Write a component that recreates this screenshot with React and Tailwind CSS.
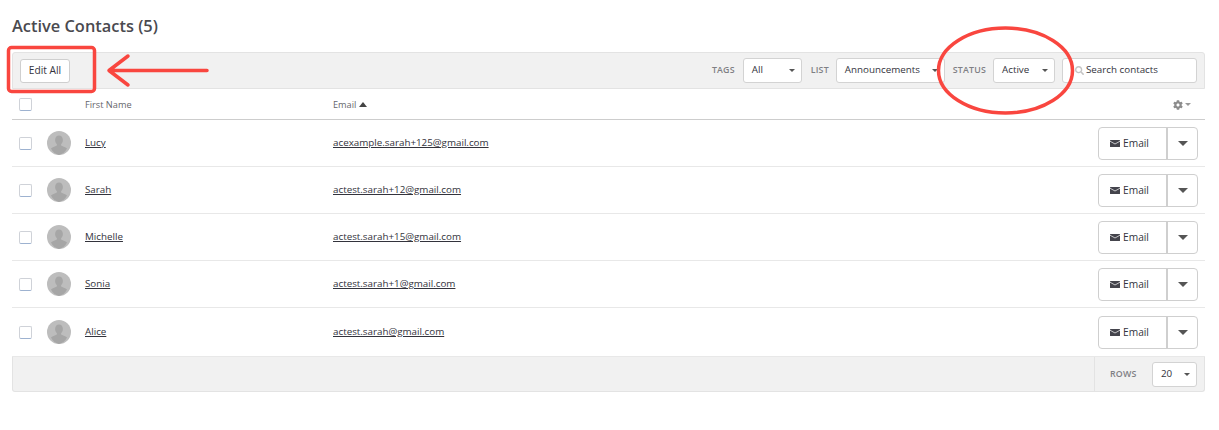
import React from 'react';
import { FaCog, FaSearch } from 'react-icons/fa';

const contacts = [
  { name: 'Lucy', email: 'acexample.sarah+125@gmail.com' },
  { name: 'Sarah', email: 'actest.sarah+12@gmail.com' },
  { name: 'Michelle', email: 'actest.sarah+15@gmail.com' },
  { name: 'Sonia', email: 'actest.sarah+1@gmail.com' },
  { name: 'Alice', email: 'actest.sarah@gmail.com' },
];

const Caret = ({ className = 'border-x-[3px] border-t-[3px] border-t-[#555]' }) => (
  <span className={`block w-0 h-0 border-x-transparent ${className}`} />
);

const Select = ({ label, width, className = '' }) => (
  <div className={`${width} ${className} h-[25px] bg-white border border-[#d3d3d3] rounded-[3px] flex items-center justify-between pl-2 pr-[6px] text-[9.800px] text-[#33333c]`}>
    <span>{label}</span>
    <Caret />
  </div>
);

const FilterLabel = ({ children, className = '' }) => (
  <span className={`block text-[8.800px] leading-none font-semibold tracking-[0.2px] text-[#7f7f84] ${className}`}>{children}</span>
);

const Checkbox = () => (
  <div className="w-[13px] h-[13px] bg-white border border-[#cfd2d8] border-b-[#9db2d0] rounded-[2px]" />
);

const Avatar = () => (
  <svg viewBox="0 0 24 24" className="w-6 h-6 shrink-0">
    <circle cx="12" cy="12" r="12" fill="#bdbdbd" />
    <path d="M12 4.500c2.400 0 3.900 1.900 3.900 4.400 0 1.800-.8 3.300-1.800 4.200v1.400c.9.800 4.400 1.400 5.900 3.100A11.800 11.800 0 0 1 12 24a11.800 11.800 0 0 1-8-6.400c1.500-1.700 5-2.300 5.900-3.100v-1.400c-1-.9-1.800-2.400-1.800-4.200 0-2.500 1.500-4.400 3.900-4.400z" fill="#a6a6a6" />
  </svg>
);

const EnvelopeIcon = () => (
  <svg viewBox="0 0 10 7" className="w-[10px] h-[7px] shrink-0">
    <rect width="10" height="7" rx="0.5" fill="#44444c" />
    <path d="M0 1.200 5 4l5-2.800" fill="none" stroke="#fff" strokeWidth="0.7" />
  </svg>
);

const Annotations = () => (
  <svg className="absolute left-0 top-0 w-[1219px] h-[430px] pointer-events-none" viewBox="0 0 1219 430" fill="none" stroke="#f9463f" strokeLinecap="round" strokeLinejoin="round">
    <rect x="8.500" y="47.500" width="86" height="44" rx="3" strokeWidth="3.500" />
    <path d="M207 70.500H110M128 56l-19 14.500L128 85" strokeWidth="3.500" />
    <ellipse cx="1005.500" cy="70.500" rx="67" ry="42.500" strokeWidth="3.500" />
  </svg>
);

const App = () => {
  return (
    <div className="relative w-[1219px] h-[430px] overflow-hidden bg-white font-['Open_Sans',sans-serif] text-[#33333c]">
      <div className="pl-3 pr-[14px]">
        <h1 className="h-[52px] pt-[15px] text-[16.400px] leading-[22px] font-semibold text-[#4a4a4f]">Active Contacts (5)</h1>

        {/* Toolbar */}
        <div className="h-[37px] bg-[#f1f1f1] border border-[#e3e3e3] rounded-t-[3px] flex items-center justify-between px-[7px]">
          <button className="w-[50px] h-[24px] bg-white border border-[#cfcfcf] rounded-[3px] text-[10.200px] font-medium text-[#33333c]">Edit All</button>
          <div className="flex items-center">
            <FilterLabel>TAGS</FilterLabel>
            <Select label="All" width="w-[59px]" className="ml-2" />
            <FilterLabel className="ml-[9px]">LIST</FilterLabel>
            <Select label="Announcements" width="w-[109px]" className="ml-[7px]" />
            <FilterLabel className="ml-2">STATUS</FilterLabel>
            <Select label="Active" width="w-[62px]" className="ml-[7px]" />
            <div className="ml-[7px] w-[135px] h-[25px] bg-white border border-[#d3d3d3] rounded-[3px] flex items-center pl-[12px] text-[9.800px]">
              <FaSearch size={9} className="text-[#c4c4c4] mr-[2px]" />
              <span>Search contacts</span>
            </div>
          </div>
        </div>

        {/* Column headers */}
        <div className="h-[31px] pt-px border-b border-[#cdcdcd] flex items-center text-[9.200px] text-[#66666c]">
          <div className="w-[73px] pl-[7px]"><Checkbox /></div>
          <div className="w-[248px]">First Name</div>
          <div className="flex-1 flex items-center gap-[3px]">
            Email
            <span className="block w-0 h-0 border-x-[4px] border-x-transparent border-b-[5px] border-b-[#444]" />
          </div>
          <div className="flex items-center gap-[2px] pr-[14px] text-[#8c8c8c]">
            <FaCog size={10} />
            <Caret className="border-x-[3px] border-t-[3px] border-t-[#999]" />
          </div>
        </div>

        {/* Rows */}
        {contacts.map((contact, index) => (
          <div key={contact.email} className={`${index === 4 ? 'h-[49px]' : 'h-[47px]'} border-b border-[#e8e8e8] flex items-center text-[9.800px]`}>
            <div className="w-[35px] pl-[7px]"><Checkbox /></div>
            <div className="w-[38px]"><Avatar /></div>
            <div className="w-[248px]"><a className="underline text-[#33333c]">{contact.name}</a></div>
            <div className="flex-1"><a className="underline text-[#33333c]">{contact.email}</a></div>
            <div className="mr-[7px] w-[100px] h-[33px] bg-white border border-[#cfcfcf] rounded-[4px] flex">
              <button className="w-[69px] flex items-center justify-center gap-[3px] pt-px pr-[6px] border-r-2 border-[#cfcfcf] font-medium text-[10.200px]">
                <EnvelopeIcon />
                Email
              </button>
              <div className="flex-1 flex items-center justify-center">
                <Caret className="border-x-[5px] border-t-[5px] border-t-[#555]" />
              </div>
            </div>
          </div>
        ))}

        {/* Footer */}
        <div className="h-[35px] bg-[#f1f1f1] border border-[#e3e3e3] border-t-0 rounded-b-[3px] flex justify-end">
          <div className="w-[110px] border-l border-[#e3e3e3] flex items-center justify-between pl-[15px] pr-[7px]">
            <FilterLabel>ROWS</FilterLabel>
            <Select label="20" width="w-[45px]" />
          </div>
        </div>
      </div>
      <Annotations />
    </div>
  );
};

export default App;
